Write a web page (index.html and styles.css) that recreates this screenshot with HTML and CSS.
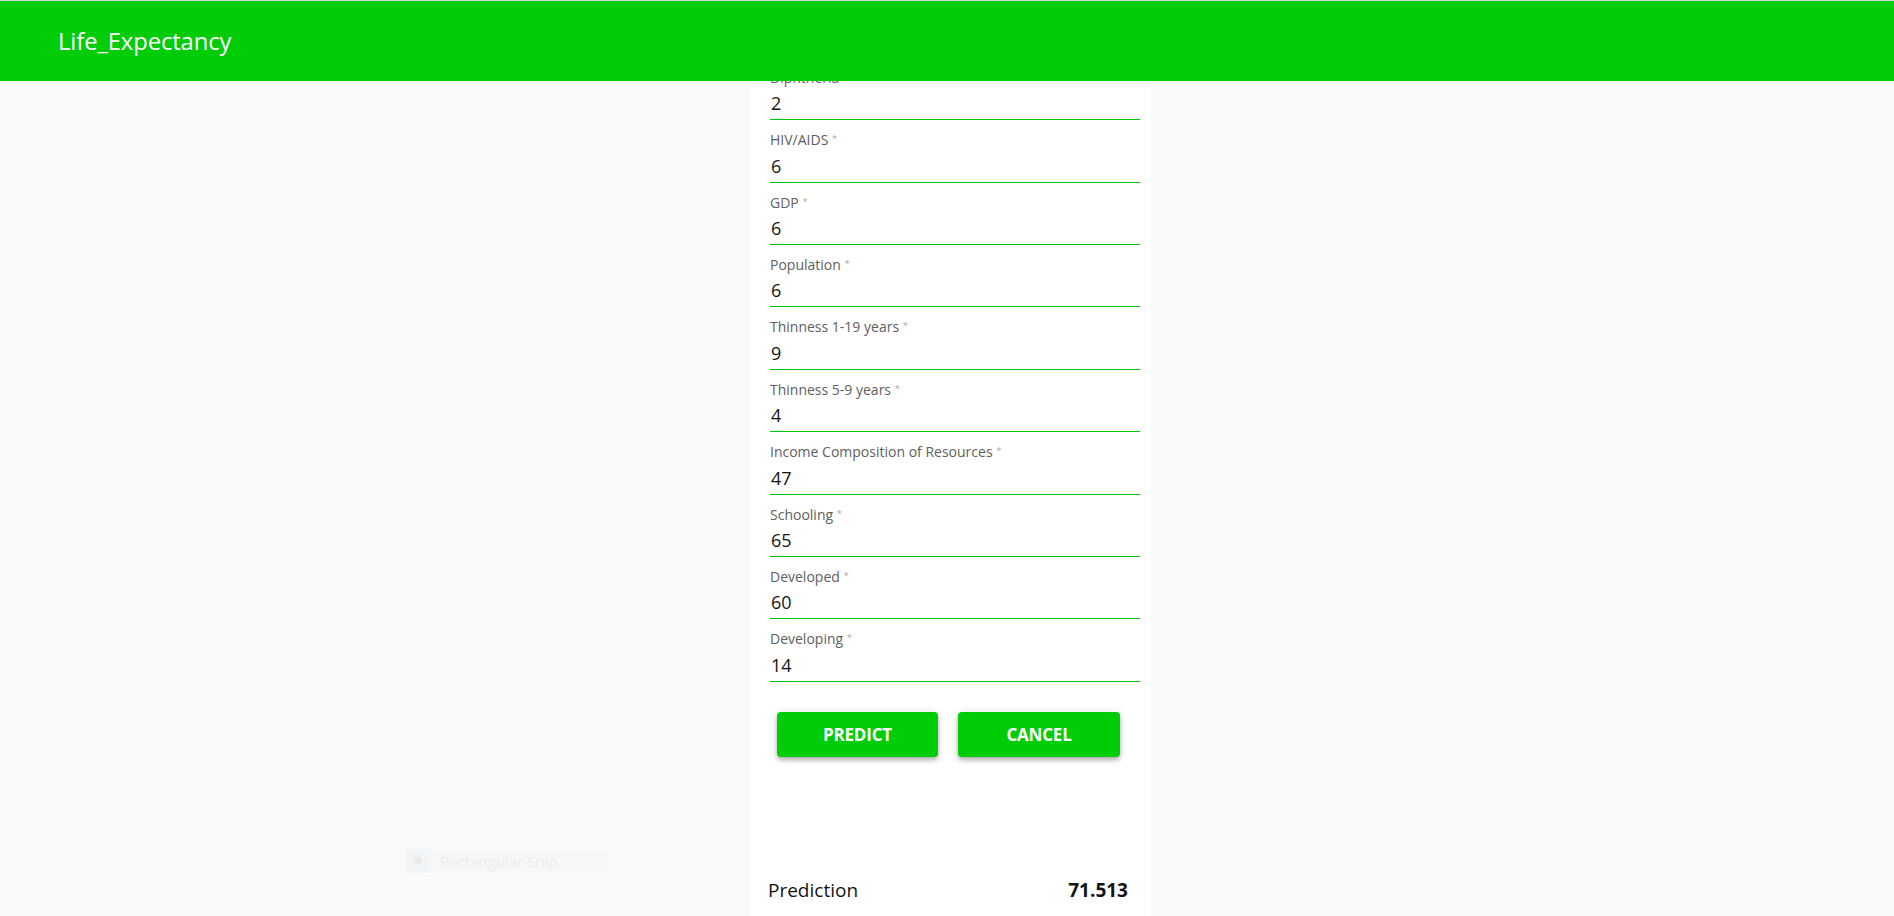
FILE: index.html
```html
<!DOCTYPE html>
<html lang="en">
<head>
<meta charset="utf-8">
<title>Life_Expectancy</title>
<link rel="stylesheet" href="styles.css">
</head>
<body>
<header class="topbar">
  <h1 class="brand">Life_Expectancy</h1>
</header>
<main class="page">
  <section class="card">
    <form class="form">
      <div class="field"><label class="label">Diphtheria <span class="req">*</span></label><div class="value">2</div></div>
      <div class="field"><label class="label">HIV/AIDS <span class="req">*</span></label><div class="value">6</div></div>
      <div class="field"><label class="label">GDP <span class="req">*</span></label><div class="value">6</div></div>
      <div class="field"><label class="label">Population <span class="req">*</span></label><div class="value">6</div></div>
      <div class="field"><label class="label">Thinness 1-19 years <span class="req">*</span></label><div class="value">9</div></div>
      <div class="field"><label class="label">Thinness 5-9 years <span class="req">*</span></label><div class="value">4</div></div>
      <div class="field"><label class="label">Income Composition of Resources <span class="req">*</span></label><div class="value">47</div></div>
      <div class="field"><label class="label">Schooling <span class="req">*</span></label><div class="value">65</div></div>
      <div class="field"><label class="label">Developed <span class="req">*</span></label><div class="value">60</div></div>
      <div class="field"><label class="label">Developing <span class="req">*</span></label><div class="value">14</div></div>
      <div class="actions">
        <button type="button" class="btn">PREDICT</button>
        <button type="button" class="btn">CANCEL</button>
      </div>
    </form>
    <div class="result">
      <span class="result-label">Prediction</span>
      <span class="result-value">71.513</span>
    </div>
  </section>
</main>
<div class="snip"><span class="snip-icon"><span class="snip-dot"></span></span><span class="snip-text">Rectangular Snip</span></div>
</body>
</html>
```

FILE: styles.css
```css
html, body {
  margin: 0;
  padding: 0;
}
body {
  background: #fafafa;
  font-family: "Open Sans", "Noto Sans", "Liberation Sans", sans-serif;
  color: #1a1a1a;
  overflow: hidden;
}
.topbar {
  position: fixed;
  top: 0;
  left: 0;
  right: 0;
  height: 80px;
  border-top: 1px solid #d4d4d4;
  background: #00cc08;
  display: flex;
  align-items: center;
  padding-left: 58px;
  z-index: 10;
}
.brand {
  margin: 0;
  font-size: 23.8px;
  font-weight: 400;
  color: #ffffff;
  letter-spacing: -0.1px;
}
.page {
  display: flex;
  justify-content: center;
  padding-left: 8px;
  min-height: 100vh;
}
.card {
  width: 400px;
  background: #ffffff;
  display: flex;
  flex-direction: column;
  padding-top: 57.9px;
}
.form {
  padding: 0 11px 0 19px;
}
.field {
  padding-top: 10px;
  border-bottom: 1px solid #00c808;
}
.label {
  display: block;
  font-size: 14px;
  line-height: 20px;
  color: #606060;
}
.req {
  font-size: 9.5px;
  color: #a8a8a8;
  vertical-align: top;
  position: relative;
  top: -1px;
}
.value {
  margin-top: 3.4px;
  font-size: 18px;
  line-height: 24px;
  padding: 0 0 4px 1px;
  color: #141414;
}
.actions {
  display: flex;
  gap: 20px;
  padding-left: 7px;
  margin-top: 30px;
}
.btn {
  width: 161px;
  height: 45px;
  border: none;
  border-radius: 4px;
  background: #00cc08;
  color: #ffffff;
  font-family: "Open Sans", "Noto Sans", sans-serif;
  font-size: 17px;
  font-weight: 700;
  letter-spacing: -0.2px;
  box-shadow: 0 2px 4px -1px rgba(0,0,0,0.2), 0 4px 5px 0 rgba(0,0,0,0.14), 0 1px 10px 0 rgba(0,0,0,0.12);
  cursor: pointer;
}
.btn + .btn {
  width: 162px;
}
.result {
  margin-top: 119px;
  display: flex;
  justify-content: space-between;
  padding: 0 23px 0 17px;
  font-size: 19px;
  line-height: 28px;
}
.result-label {
  color: #141414;
}
.result-value {
  font-weight: 700;
  color: #141414;
}
.snip {
  position: absolute;
  left: 406px;
  top: 849px;
  width: 202px;
  height: 24px;
  display: flex;
  align-items: center;
  background: #f7f7f8;
}
.snip-icon {
  width: 24px;
  height: 24px;
  background: #f2f5f8;
  display: flex;
  align-items: center;
  justify-content: center;
}
.snip-dot {
  width: 8px;
  height: 8px;
  border-radius: 50%;
  background: #e9e9e9;
}
.snip-text {
  margin-left: 10px;
  font-size: 15px;
  color: #ebebeb;
}
```
